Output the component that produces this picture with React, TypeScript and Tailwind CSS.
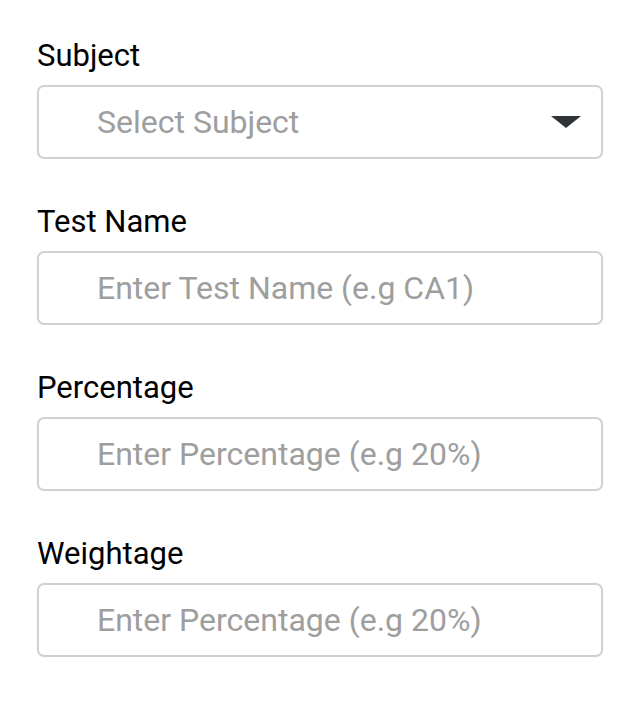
import React from "react";

const fields = [
  { label: "Test Name", placeholder: "Enter Test Name (e.g CA1)" },
  { label: "Percentage", placeholder: "Enter Percentage (e.g 20%)" },
  { label: "Weightage", placeholder: "Enter Percentage (e.g 20%)" },
];

const App: React.FC = () => {
  return (
    <div
      className="min-h-screen bg-white px-[37px] pt-[38px]"
      style={{ fontFamily: "Roboto, 'Liberation Sans', sans-serif" }}>
      {/* Subject select */}
      <div className="mb-[45px]">
        <label className="block text-[31px] leading-[36px] text-black mb-[11px]">
          Subject
        </label>
        <div className="flex items-center justify-between h-[74px] w-[566px] border-2 border-[#d0d0d0] rounded-[7px] pl-[58px] pr-[20px]">
          <span className="text-[32px] text-[#9e9e9e]">Select Subject</span>
          <svg width="30" height="12" viewBox="0 0 30 12">
            <path d="M0 0 L30 0 L15 12 Z" fill="#2f3336" />
          </svg>
        </div>
      </div>

      {fields.map((field, i) => (
        <div key={i} className="mb-[45px]">
          <label className="block text-[31px] leading-[36px] text-black mb-[11px]">
            {field.label}
          </label>
          <input
            type="text"
            placeholder={field.placeholder}
            className="block h-[74px] w-[566px] border-2 border-[#d0d0d0] rounded-[7px] pl-[58px] text-[32px] outline-none placeholder:text-[#9e9e9e]"
          />
        </div>
      ))}
    </div>
  );
};

export default App;
